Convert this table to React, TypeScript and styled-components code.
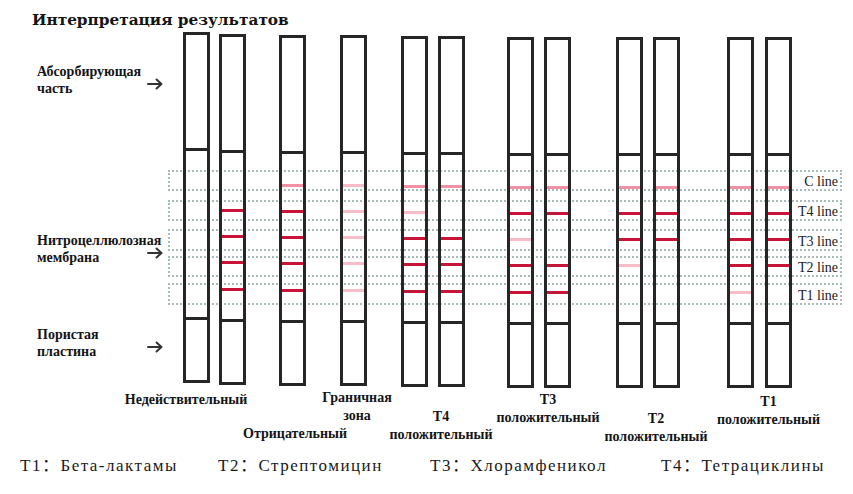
import React from "react";
import styled, { createGlobalStyle } from "styled-components";

const GlobalStyle = createGlobalStyle`
  html, body {
    margin: 0;
    padding: 0;
    background: #fff;
  }
`;

const INK = "#262626";

const Page = styled.div`
  width: 853px;
  height: 494px;
  overflow: hidden;
  background: #fff;
  color: #141414;
`;

const Title = styled.h1`
  margin: 0;
  padding: 9px 0 0 32px;
  height: 22px;
  line-height: 22px;
  font-family: "DejaVu Serif", "Liberation Serif", serif;
  font-weight: bold;
  font-size: 15.3px;
`;

const Diagram = styled.div`
  position: relative;
  display: flex;
  height: 414px;
`;

const LeftCol = styled.div`
  width: 128px;
  padding-left: 37px;
  display: flex;
  flex-direction: column;
`;

const Part = styled.div<{ $top: number }>`
  display: flex;
  align-items: flex-start;
  margin-top: ${(p) => p.$top}px;
`;

const PartText = styled.div`
  width: 110px;
  font-family: "Liberation Serif", serif;
  font-weight: bold;
  font-size: 14px;
  line-height: 17px;
  white-space: nowrap;
`;

const ArrowIcon = styled.svg`
  margin-top: 15px;
  flex-shrink: 0;
`;

const Zones = styled.div`
  position: absolute;
  left: 168px;
  top: 139px;
  width: 674px;
  display: flex;
  flex-direction: column;
`;

const Zone = styled.div<{ $top: number; $h: number }>`
  box-sizing: border-box;
  height: ${(p) => p.$h}px;
  margin-top: ${(p) => p.$top}px;
  border: 2px dotted #a9baba;
  display: flex;
  justify-content: flex-end;
  align-items: center;
  padding: 3px 2px 0 0;
  font-family: "Liberation Serif", serif;
  font-size: 14px;
  color: #222;
`;

const StripsRow = styled.div`
  position: relative;
  z-index: 1;
  display: flex;
  align-items: flex-start;
  margin-left: 18px;
`;

const Group = styled.div<{ $gap: number }>`
  display: flex;
  flex-direction: column;
  margin-left: ${(p) => p.$gap}px;
`;

const Pair = styled.div<{ $gap: number }>`
  display: flex;
  align-items: flex-start;
  gap: ${(p) => p.$gap}px;
`;

const Strip = styled.div<{ $dy: number }>`
  box-sizing: border-box;
  width: 27px;
  height: 351px;
  margin-top: ${(p) => p.$dy}px;
  border: 3px solid ${INK};
  display: flex;
  flex-direction: column;
`;

const Absorbent = styled.div`
  box-sizing: border-box;
  height: 116px;
  border-bottom: 3px solid ${INK};
  flex-shrink: 0;
`;

const Membrane = styled.div`
  box-sizing: border-box;
  height: 169px;
  padding-top: 18px;
  border-bottom: 3px solid ${INK};
  flex-shrink: 0;
  display: flex;
  flex-direction: column;
`;

const Slot = styled.div`
  height: 26.25px;
  display: flex;
  align-items: center;
`;

type Tone = "s" | "c" | "w" | null;

const toneColor: Record<string, string> = {
  s: "#c9143a",
  c: "#f291a6",
  w: "#f8bcc8",
};

const Band = styled.div<{ $tone: Tone }>`
  width: 100%;
  height: 3px;
  background: ${(p) => (p.$tone ? toneColor[p.$tone] : "transparent")};
`;

const Pad = styled.div`
  flex: 1;
`;

/* zero-width box so the label is centred under the strips without widening the group */
const Caption = styled.div<{ $top: number; $shift: number }>`
  align-self: center;
  width: 0;
  display: flex;
  flex-direction: column;
  align-items: center;
  margin-top: ${(p) => p.$top}px;
  transform: translateX(${(p) => p.$shift}px);
  font-family: "Liberation Serif", serif;
  font-weight: bold;
  font-size: 14px;
  line-height: 17.5px;
  white-space: nowrap;
`;

const Footer = styled.div`
  display: grid;
  grid-template-columns: 198px 212px 231px auto;
  padding-left: 20px;
  margin-top: 11px;
  font-family: "Liberation Serif", "Noto Sans CJK SC", serif;
  font-size: 17px;
  letter-spacing: 1.5px;
  line-height: 20px;
  color: #1a1a1a;
  white-space: nowrap;
`;

const Arrow = () => (
  <ArrowIcon width="16" height="12" viewBox="0 0 16 12">
    <path
      d="M1 6 H14.5 M9.5 1.5 L14.5 6 L9.5 10.5"
      fill="none"
      stroke="#333"
      strokeWidth="2"
      strokeLinecap="round"
      strokeLinejoin="round"
    />
  </ArrowIcon>
);

interface StripData {
  dy: number;
  bands: Tone[]; // C, T4, T3, T2, T1
}

interface GroupData {
  gap: number;
  pairGap: number;
  strips: StripData[];
  caption: string[];
  capTop: number;
  capShift: number;
}

const groups: GroupData[] = [
  {
    gap: 0,
    pairGap: 9,
    strips: [
      { dy: 1, bands: [null, null, null, null, null] },
      { dy: 3, bands: [null, "s", "s", "s", "s"] },
    ],
    caption: ["Недействительный"],
    capTop: 6.25,
    capShift: -28.5,
  },
  {
    gap: 33,
    pairGap: 10,
    strips: [{ dy: 4, bands: ["c", "s", "s", "s", "s"] }],
    caption: ["Отрицательный"],
    capTop: 39.25,
    capShift: 2.5,
  },
  {
    gap: 34,
    pairGap: 10,
    strips: [{ dy: 4, bands: ["w", "w", "w", "w", "w"] }],
    caption: ["Граничная", "зона"],
    capTop: 3.25,
    capShift: 3.5,
  },
  {
    gap: 34,
    pairGap: 10,
    strips: [
      { dy: 5, bands: ["c", "w", "s", "s", "s"] },
      { dy: 5, bands: ["c", null, "s", "s", "s"] },
    ],
    caption: ["T4", "положительный"],
    capTop: 21.25,
    capShift: 8,
  },
  {
    gap: 42,
    pairGap: 10,
    strips: [
      { dy: 6, bands: ["c", "s", "w", "s", "s"] },
      { dy: 6, bands: ["c", "s", null, "s", "s"] },
    ],
    caption: ["T3", "положительный"],
    capTop: 3.25,
    capShift: 9,
  },
  {
    gap: 45,
    pairGap: 10,
    strips: [
      { dy: 6, bands: ["c", "s", "s", "w", null] },
      { dy: 6, bands: ["c", "s", "s", null, null] },
    ],
    caption: ["T2", "положительный"],
    capTop: 22.25,
    capShift: 8,
  },
  {
    gap: 47,
    pairGap: 11,
    strips: [
      { dy: 6, bands: ["c", "s", "s", "s", "w"] },
      { dy: 6, bands: ["c", "s", "s", "s", null] },
    ],
    caption: ["T1", "положительный"],
    capTop: 5.25,
    capShift: 9,
  },
];

const zones = [
  { label: "C line", top: 0, h: 21 },
  { label: "T4 line", top: 9, h: 21 },
  { label: "T3 line", top: 8, h: 22 },
  { label: "T2 line", top: 5, h: 21 },
  { label: "T1 line", top: 6, h: 22 },
];

const parts = [
  { top: 31.5, lines: ["Абсорбирующая", "часть"] },
  { top: 135, lines: ["Нитроцеллюлозная", "мембрана"] },
  { top: 60, lines: ["Пористая", "пластина"] },
];

const legend = [
  "T1：Бета-лактамы",
  "T2：Стрептомицин",
  "T3：Хлорамфеникол",
  "T4：Тетрациклины",
];

const App: React.FC = () => {
  return (
    <Page>
      <GlobalStyle />
      <Title>Интерпретация результатов</Title>
      <Diagram>
        <LeftCol>
          {parts.map((part) => (
            <Part key={part.lines[0]} $top={part.top}>
              <PartText>
                {part.lines[0]}
                <br />
                {part.lines[1]}
              </PartText>
              <Arrow />
            </Part>
          ))}
        </LeftCol>
        <Zones>
          {zones.map((z) => (
            <Zone key={z.label} $top={z.top} $h={z.h}>
              {z.label}
            </Zone>
          ))}
        </Zones>
        <StripsRow>
          {groups.map((g, gi) => (
            <Group key={gi} $gap={g.gap}>
              <Pair $gap={g.pairGap}>
                {g.strips.map((s, si) => (
                  <Strip key={si} $dy={s.dy}>
                    <Absorbent />
                    <Membrane>
                      {s.bands.map((b, bi) => (
                        <Slot key={bi}>
                          <Band $tone={b} />
                        </Slot>
                      ))}
                    </Membrane>
                    <Pad />
                  </Strip>
                ))}
              </Pair>
              <Caption $top={g.capTop} $shift={g.capShift}>
                {g.caption.map((line) => (
                  <span key={line}>{line}</span>
                ))}
              </Caption>
            </Group>
          ))}
        </StripsRow>
      </Diagram>
      <Footer>
        {legend.map((item) => (
          <span key={item}>{item}</span>
        ))}
      </Footer>
    </Page>
  );
};

export default App;
